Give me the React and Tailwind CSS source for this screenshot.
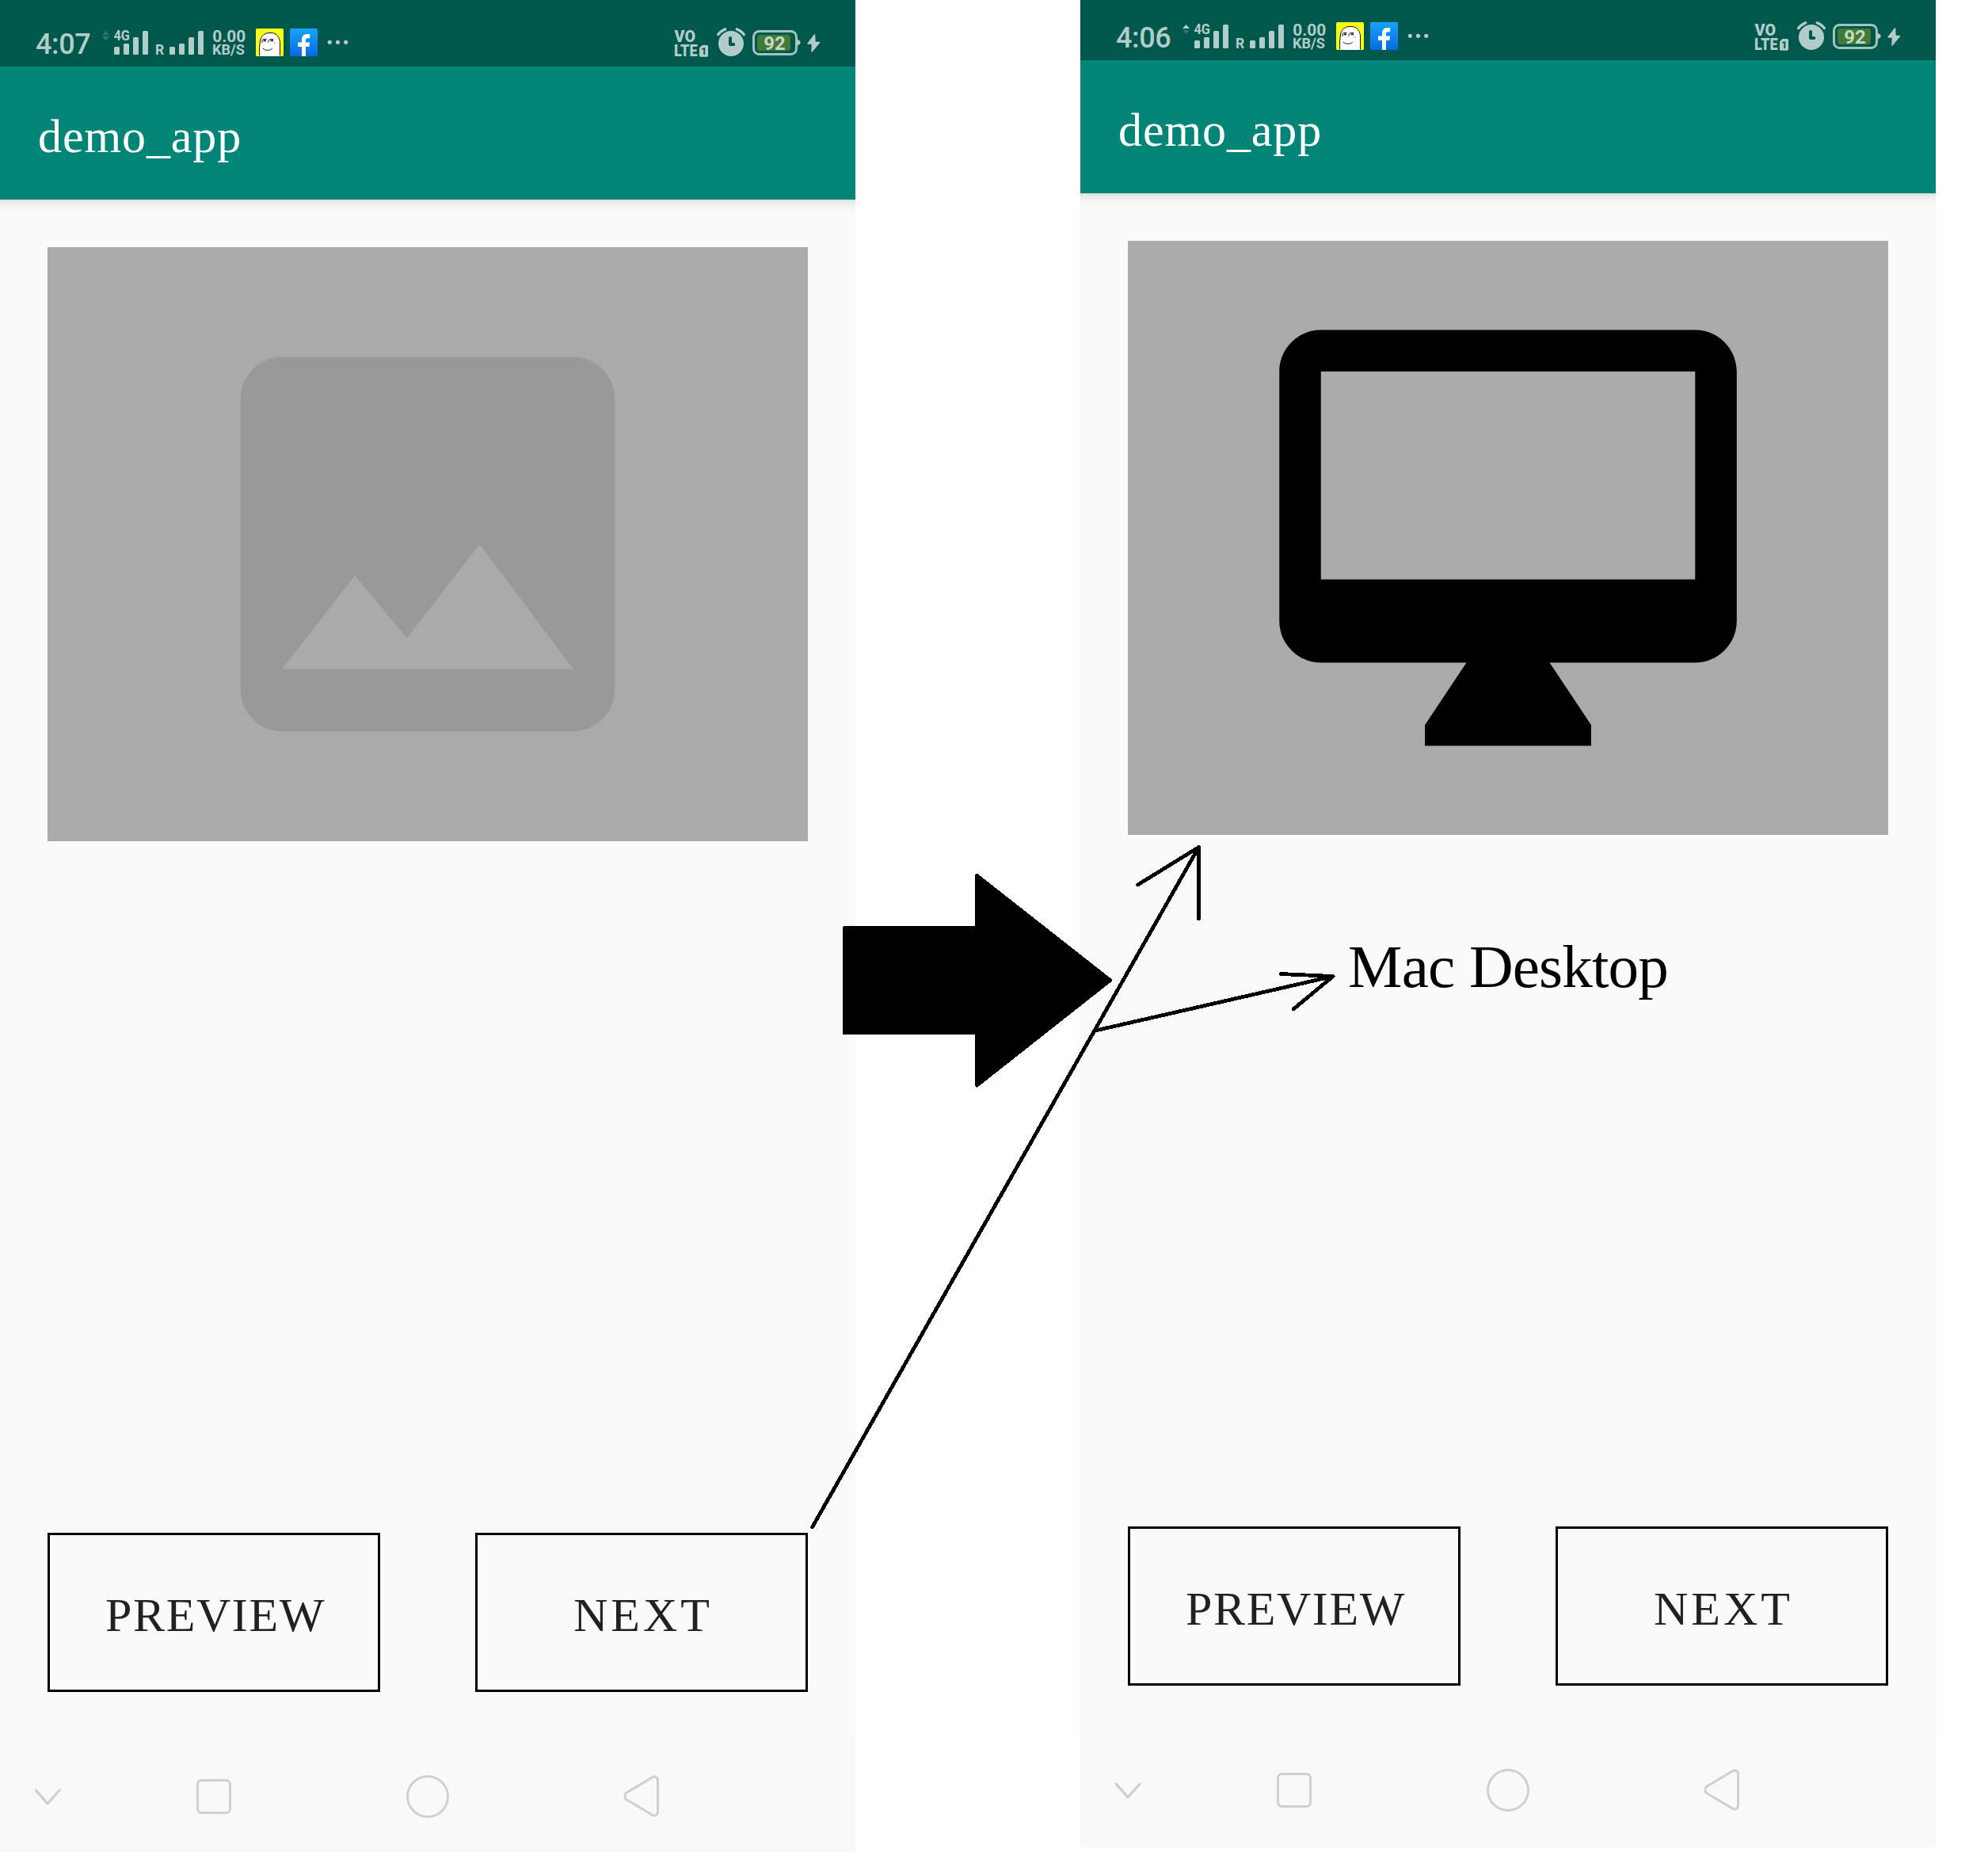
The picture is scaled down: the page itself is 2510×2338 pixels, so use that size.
import React from "react";

const INK = "#b2cdc9";

function SignalBars({ x }) {
  return (
    <g fill={INK}>
      <rect x={x} y="23" width="7" height="10" rx="1.5" />
      <rect x={x + 12} y="19" width="7" height="14" rx="1.5" />
      <rect x={x + 24} y="11" width="7" height="22" rx="1.5" />
      <rect x={x + 36} y="3" width="7" height="30" rx="1.5" />
    </g>
  );
}

function Network({ uploading }) {
  return (
    <svg className="ml-[13px] h-9 w-[60px] shrink-0 overflow-visible" viewBox="0 0 60 36">
      <path d="M1 8h9L5.500 3z" fill={INK} opacity={uploading ? 1 : 0.28} />
      <path d="M1 10h9L5.500 15z" fill={INK} opacity="0.28" />
      <text x="15.5" y="15.2" fontFamily="Roboto" fontWeight="700" fontSize="17.5" fill={INK} textLength="20.5" lengthAdjust="spacingAndGlyphs">4G</text>
      <SignalBars x={16} />
    </svg>
  );
}

function Roaming() {
  return (
    <svg className="ml-2 h-9 w-[62px] shrink-0 overflow-visible" viewBox="0 0 62 36">
      <text x="0" y="33" fontFamily="Roboto" fontWeight="700" fontSize="17.5" fill={INK}>R</text>
      <SignalBars x={18} />
    </svg>
  );
}

function GhostIcon() {
  return (
    <svg className="h-[35px] w-[35px] shrink-0" viewBox="0 0 35 35">
      <rect width="35" height="35" rx="1.5" fill="#fbff12" />
      <path d="M4.800 35V19C4.800 10 9.500 5.500 17 5.500h2C26.500 5.500 30.500 10.500 30.500 17v18z" fill="#fff" />
      <path d="M4.600 34.500V24L5.500 15C7 9 11.500 5.500 17 5.500h2c6 0 10 3.500 11.500 11V34.500" fill="none" stroke="#111" strokeWidth="1" />
      <path d="M7 15.500l2.500-2h4M15.500 15.500l3-2h3.500M7.500 18l1-2M15.500 17.500l1-1.500" fill="none" stroke="#111" strokeWidth="1" />
      <path d="M9.500 14.500h3.500v1.700h-3.500zM18.500 14.500h3.500v1.700h-3.500z" fill="#111" />
      <path d="M9 24.800c1 2 3 2.500 6 2.500s5-.5 5.500-2.500" fill="none" stroke="#222" strokeWidth="1" />
      <path d="M22.500 17h2.500v3h-2zM12 17.500h1.500v1H12z" fill="#f9c6c4" />
    </svg>
  );
}

function FacebookIcon({ id }) {
  return (
    <svg className="ml-2 h-[35px] w-[35px] shrink-0" viewBox="0 0 35 35">
      <defs>
        <linearGradient id={id} x1="0" y1="0" x2="0" y2="1">
          <stop offset="0" stopColor="#18a3fd" />
          <stop offset="1" stopColor="#0669e2" />
        </linearGradient>
      </defs>
      <rect width="35" height="35" rx="1.5" fill={`url(#${id})`} />
      <path d="M15 35V23h-5v-5.500h5V14c0-4.700 2.600-7 7-7h3.200v5.300H22.500c-1.800 0-2.500.9-2.500 2.400v2.800h5.200l-.9 5.500H20v12z" fill="#fff" />
    </svg>
  );
}

function StatusBar({ time, uploading, id }) {
  return (
    <div className="flex h-[84px] items-start bg-[#00574b] pt-9 pr-[44px] pl-[45px] font-['Roboto',sans-serif] text-[#b2cdc9]">
      <span className="w-[70px] shrink-0 text-[36px] leading-[40px] font-medium tracking-[-0.4px]">{time}</span>
      <Network uploading={uploading} />
      <Roaming />
      <svg className="ml-[9px] h-9 w-11 shrink-0 overflow-visible" viewBox="0 0 44 36">
        <g fontFamily="Roboto" fontWeight="700" fill={INK}>
          <text x="1.300" y="16.600" fontSize="20.500" textLength="42" lengthAdjust="spacingAndGlyphs">0.00</text>
          <text x="1" y="33" fontSize="17.500" textLength="41" lengthAdjust="spacingAndGlyphs">KB/S</text>
        </g>
      </svg>
      <div className="ml-3 flex shrink-0">
        <GhostIcon />
        <FacebookIcon id={id} />
      </div>
      <svg className="ml-3 h-9 w-7 shrink-0" viewBox="0 0 28 36" fill={INK}>
        <circle cx="3.300" cy="17.300" r="2.600" />
        <circle cx="13.500" cy="17.300" r="2.600" />
        <circle cx="23.700" cy="17.300" r="2.600" />
      </svg>
      <svg className="ml-auto h-9 w-11 shrink-0 overflow-visible" viewBox="0 0 44 36">
        <g fontFamily="Roboto" fontWeight="900" fill={INK}>
          <text x="0.500" y="16.800" fontSize="20.500" textLength="26.500" lengthAdjust="spacingAndGlyphs">VO</text>
          <text x="0" y="35.400" fontSize="20.500" textLength="29.500" lengthAdjust="spacingAndGlyphs">LTE</text>
        </g>
        <path d="M35.500 21h6c.8 0 1.500.7 1.500 1.500V34.300c0 .8-.7 1.500-1.500 1.500h-8c-.8 0-1.500-.7-1.500-1.500V24.500z" fill={INK} />
        <text x="34" y="33.300" fontFamily="Roboto" fontWeight="700" fontSize="13" fill="#00574b">1</text>
      </svg>
      <svg className="ml-2.5 h-9 w-9 shrink-0 overflow-visible" viewBox="0 0 36 36">
        <circle cx="18" cy="19" r="16" fill={INK} />
        <path d="M1.700 7.500C3.500 4.800 6.500 2.500 10.700 0.800M34.300 7.500C32.500 4.800 29.500 2.500 25.300 0.800" fill="none" stroke={INK} strokeWidth="3.400" strokeLinecap="round" />
        <path d="M17 12v8h4.300" fill="none" stroke="#00574b" strokeWidth="4" strokeLinecap="round" strokeLinejoin="round" />
      </svg>
      <svg className="ml-[9px] h-9 w-[61px] shrink-0 overflow-visible" viewBox="0 0 61 36">
        <rect x="1.500" y="3.500" width="54" height="29" rx="7" fill="none" stroke="#a3c3be" strokeWidth="3" />
        <path d="M57 14.500l3 1.500v3l-3 2z" fill={INK} stroke={INK} strokeLinejoin="round" />
        <rect x="6" y="8" width="42" height="20" rx="3.500" fill="#427a38" />
        <text x="14.200" y="26.700" fontFamily="Roboto" fontWeight="700" fontSize="23.500" fill="#c6d7c3" textLength="27.500" lengthAdjust="spacingAndGlyphs">92</text>
      </svg>
      <svg className="ml-[7px] h-9 w-[18px] shrink-0" viewBox="0 0 18 36">
        <path d="M10.500 8L2 19h5.500L7 29l9.500-11.500H11z" fill={INK} stroke={INK} strokeWidth="1.500" strokeLinejoin="round" />
      </svg>
    </div>
  );
}

function NavBar() {
  return (
    <nav className="flex h-36 shrink-0 items-center bg-[#f9f9f9] pl-[30px]">
      <svg className="h-[60px] w-[60px]" viewBox="0 0 60 60">
        <path d="M15.200 22l14.800 17 15.200-17" fill="none" stroke="#cdcdcd" strokeWidth="3" strokeLinecap="round" strokeLinejoin="round" />
      </svg>
      <svg className="ml-[150px] h-[60px] w-[60px]" viewBox="0 0 60 60">
        <rect x="9.500" y="9.500" width="41" height="41" rx="5" fill="none" stroke="#d0d0d0" strokeWidth="3" />
      </svg>
      <svg className="ml-[210px] h-[60px] w-[60px]" viewBox="0 0 60 60">
        <circle cx="30" cy="30" r="25.500" fill="none" stroke="#d0d0d0" strokeWidth="3" />
      </svg>
      <svg className="ml-[210px] h-[60px] w-[60px]" viewBox="0 0 60 60">
        <path d="M10.500 25.500L43.300 5.900Q45.500 4.700 47.700 5.300Q50.500 6.300 50.500 9.500V49.500Q50.500 52.700 47.700 53.700Q45.500 54.300 43.300 53.100L10.500 33.500Q9 32.500 9 29.500Q9 26.500 10.500 25.500Z" fill="none" stroke="#d0d0d0" strokeWidth="3" strokeLinejoin="round" />
      </svg>
    </nav>
  );
}

function Phone({ time, uploading, icon, iconColor, caption, id }) {
  return (
    <section className="flex h-[2340px] w-[1080px] flex-col bg-[#fafafa] font-['Liberation_Serif',serif]">
      <StatusBar time={time} uploading={uploading} id={id} />
      <header className="flex h-[168px] shrink-0 items-center bg-[#008577] pl-12">
        <h1 className="pt-2 text-[60px] leading-[68px] tracking-[0.9px] text-white">demo_app</h1>
      </header>
      <main className="flex flex-1 flex-col bg-[linear-gradient(to_bottom,#dfdfdf_0px,#ededed_5px,#f7f7f7_11px,#fafafa_18px)] p-[60px]">
        <div className="flex h-[750px] shrink-0 items-center justify-center bg-[#aaaaaa]">
          <svg className="h-[630px] w-[630px]" viewBox="0 0 24 24">
            <path d={icon} fill={iconColor} />
          </svg>
        </div>
        {caption && (
          <p className="mt-[122px] text-center text-[77px] leading-[88px] tracking-[-0.8px] text-black">{caption}</p>
        )}
        <div className="mt-auto flex justify-between text-[60px] text-[#212121]">
          <button className="h-[201px] w-[420px] border-3 border-black pt-1.5 pl-1 tracking-[1.600px]">PREVIEW</button>
          <button className="h-[201px] w-[420px] border-3 border-black pt-1.5 pl-1 tracking-[4px]">NEXT</button>
        </div>
      </main>
      <NavBar />
    </section>
  );
}

const IMAGE_ICON =
  "M21 19V5c0-1.100-.9-2-2-2H5c-1.100 0-2 .9-2 2v14c0 1.100.9 2 2 2h14c1.100 0 2-.9 2-2zM8.500 13.500l2.500 3.010L14.500 12l4.500 6H5l3.500-4.500z";
const DESKTOP_ICON =
  "M21 2H3c-1.100 0-2 .9-2 2v12c0 1.100.9 2 2 2h7l-2 3v1h8v-1l-2-3h7c1.100 0 2-.9 2-2V4c0-1.100-.9-2-2-2zm0 12H3V4h18v10z";

function Annotations() {
  return (
    <svg className="pointer-events-none absolute inset-0 h-full w-full" viewBox="0 0 2510 2338" stroke="#000" strokeLinecap="round" strokeLinejoin="round" strokeWidth="4.800" fill="none" shapeRendering="crispEdges">
      <path d="M1066 1171.500H1233.500V1105.500L1401.500 1237.500L1233.500 1370V1304H1066Z" fill="#000" />
      <path d="M1025.500 1928L1513.500 1069.500M1436.500 1117L1513.500 1069.500V1160" />
      <path d="M1381 1301.500L1683 1232.500L1617 1229.500M1683 1232.500L1633 1274" />
    </svg>
  );
}

export default function App() {
  return (
    <div className="relative flex h-[2338px] w-[2510px] items-start justify-start gap-[284px] overflow-hidden bg-white">
      <Phone id="fb-before" time="4:07" icon={IMAGE_ICON} iconColor="#999999" />
      <div className="-mt-2">
        <Phone id="fb-after" time="4:06" uploading icon={DESKTOP_ICON} iconColor="#000000" caption="Mac Desktop" />
      </div>
      <Annotations />
    </div>
  );
}
